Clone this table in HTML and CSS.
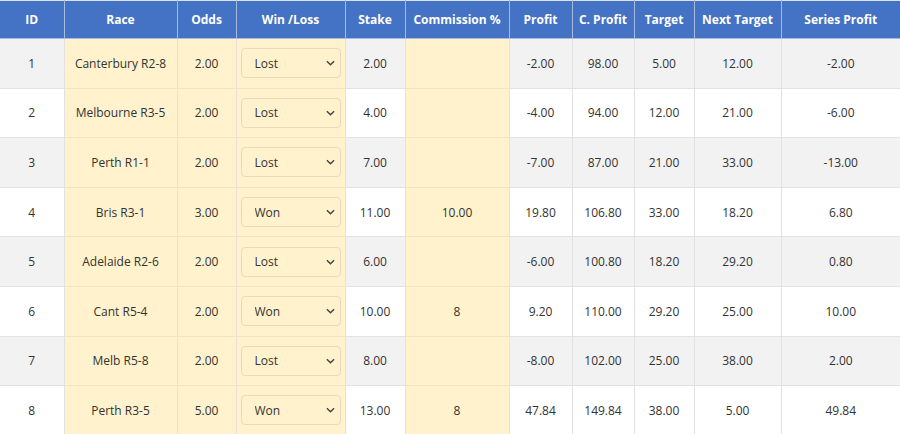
FILE: index.html
```html
<!DOCTYPE html>
<html>
<head>
<meta charset="utf-8">
<link rel="stylesheet" href="styles.css">
</head>
<body>
<table class="grid">
  <colgroup>
    <col class="c-id"><col class="c-race"><col class="c-odds"><col class="c-wl"><col class="c-stake"><col class="c-comm"><col class="c-profit"><col class="c-cprofit"><col class="c-target"><col class="c-next"><col class="c-series">
  </colgroup>
  <thead>
    <tr>
      <th>ID</th><th>Race</th><th>Odds</th><th>Win /Loss</th><th>Stake</th><th>Commission %</th><th>Profit</th><th>C. Profit</th><th>Target</th><th>Next Target</th><th>Series Profit</th>
    </tr>
  </thead>
  <tbody>
    <tr>
      <td>1</td><td class="y">Canterbury R2-8</td><td class="y">2.00</td>
      <td class="y"><div class="sel"><select><option>Lost</option><option>Won</option></select><svg class="chev" viewBox="0 0 10 6" width="9" height="6"><path d="M1 1l4 4 4-4" fill="none" stroke="#444" stroke-width="1.6"/></svg></div></td>
      <td>2.00</td><td class="y"></td><td>-2.00</td><td>98.00</td><td>5.00</td><td>12.00</td><td>-2.00</td>
    </tr>
    <tr>
      <td>2</td><td class="y">Melbourne R3-5</td><td class="y">2.00</td>
      <td class="y"><div class="sel"><select><option>Lost</option><option>Won</option></select><svg class="chev" viewBox="0 0 10 6" width="9" height="6"><path d="M1 1l4 4 4-4" fill="none" stroke="#444" stroke-width="1.6"/></svg></div></td>
      <td>4.00</td><td class="y"></td><td>-4.00</td><td>94.00</td><td>12.00</td><td>21.00</td><td>-6.00</td>
    </tr>
    <tr>
      <td>3</td><td class="y">Perth R1-1</td><td class="y">2.00</td>
      <td class="y"><div class="sel"><select><option>Lost</option><option>Won</option></select><svg class="chev" viewBox="0 0 10 6" width="9" height="6"><path d="M1 1l4 4 4-4" fill="none" stroke="#444" stroke-width="1.6"/></svg></div></td>
      <td>7.00</td><td class="y"></td><td>-7.00</td><td>87.00</td><td>21.00</td><td>33.00</td><td>-13.00</td>
    </tr>
    <tr>
      <td>4</td><td class="y">Bris R3-1</td><td class="y">3.00</td>
      <td class="y"><div class="sel"><select><option>Won</option><option>Lost</option></select><svg class="chev" viewBox="0 0 10 6" width="9" height="6"><path d="M1 1l4 4 4-4" fill="none" stroke="#444" stroke-width="1.6"/></svg></div></td>
      <td>11.00</td><td class="y">10.00</td><td>19.80</td><td>106.80</td><td>33.00</td><td>18.20</td><td>6.80</td>
    </tr>
    <tr>
      <td>5</td><td class="y">Adelaide R2-6</td><td class="y">2.00</td>
      <td class="y"><div class="sel"><select><option>Lost</option><option>Won</option></select><svg class="chev" viewBox="0 0 10 6" width="9" height="6"><path d="M1 1l4 4 4-4" fill="none" stroke="#444" stroke-width="1.6"/></svg></div></td>
      <td>6.00</td><td class="y"></td><td>-6.00</td><td>100.80</td><td>18.20</td><td>29.20</td><td>0.80</td>
    </tr>
    <tr>
      <td>6</td><td class="y">Cant R5-4</td><td class="y">2.00</td>
      <td class="y"><div class="sel"><select><option>Won</option><option>Lost</option></select><svg class="chev" viewBox="0 0 10 6" width="9" height="6"><path d="M1 1l4 4 4-4" fill="none" stroke="#444" stroke-width="1.6"/></svg></div></td>
      <td>10.00</td><td class="y">8</td><td>9.20</td><td>110.00</td><td>29.20</td><td>25.00</td><td>10.00</td>
    </tr>
    <tr>
      <td>7</td><td class="y">Melb R5-8</td><td class="y">2.00</td>
      <td class="y"><div class="sel"><select><option>Lost</option><option>Won</option></select><svg class="chev" viewBox="0 0 10 6" width="9" height="6"><path d="M1 1l4 4 4-4" fill="none" stroke="#444" stroke-width="1.6"/></svg></div></td>
      <td>8.00</td><td class="y"></td><td>-8.00</td><td>102.00</td><td>25.00</td><td>38.00</td><td>2.00</td>
    </tr>
    <tr>
      <td>8</td><td class="y">Perth R3-5</td><td class="y">5.00</td>
      <td class="y"><div class="sel"><select><option>Won</option><option>Lost</option></select><svg class="chev" viewBox="0 0 10 6" width="9" height="6"><path d="M1 1l4 4 4-4" fill="none" stroke="#444" stroke-width="1.6"/></svg></div></td>
      <td>13.00</td><td class="y">8</td><td>47.84</td><td>149.84</td><td>38.00</td><td>5.00</td><td>49.84</td>
    </tr>
  </tbody>
</table>
</body>
</html>
```

FILE: styles.css
```css
html, body {
  margin: 0;
  padding: 0;
  background: #ffffff;
}
body {
  font-family: "Open Sans", "Noto Sans", sans-serif;
  font-size: 12px;
  color: #333333;
  overflow: hidden;
}
.grid {
  width: 900px;
  border-collapse: collapse;
  table-layout: fixed;
}
.c-id { width: 64px; }
.c-race { width: 113px; }
.c-odds { width: 59px; }
.c-wl { width: 109px; }
.c-stake { width: 60px; }
.c-comm { width: 104px; }
.c-profit { width: 63px; }
.c-cprofit { width: 62px; }
.c-target { width: 60px; }
.c-next { width: 87px; }
.c-series { width: 119px; }

.grid th {
  background: #4472c4;
  color: #ffffff;
  font-weight: 700;
  height: 37px;
  padding: 0 4px;
  text-align: center;
  border: 1px solid #a7bbe0;
  border-top-color: #dde3ee;
  white-space: nowrap;
}
.grid th:first-child { border-left: none; }
.grid th:last-child { border-right: none; }
.grid td {
  height: 48.6px;
  padding: 0;
  text-align: center;
  border: 1px solid #e2e2e2;
  white-space: nowrap;
}
.grid td:first-child { border-left: none; }
.grid td:last-child { border-right: none; }
.grid tbody tr:nth-child(odd) td { background: #f2f2f2; }
.grid tbody tr:nth-child(even) td { background: #ffffff; }
.grid tbody tr td.y { background: #fff2cc; border-color: #efe5c4 #e6e2d6; }

.sel {
  position: relative;
  width: 100px;
  height: 30px;
  margin: 0 auto;
}
.sel select {
  -webkit-appearance: none;
  appearance: none;
  width: 100px;
  height: 30px;
  box-sizing: border-box;
  border: 1px solid #e6dcbc;
  border-radius: 4px;
  background: transparent;
  font-family: inherit;
  font-size: 12px;
  color: #333333;
  padding: 0 0 0 13px;
  margin: 0;
  outline: none;
}
.chev {
  position: absolute;
  right: 6px;
  top: 12px;
  pointer-events: none;
}
```
